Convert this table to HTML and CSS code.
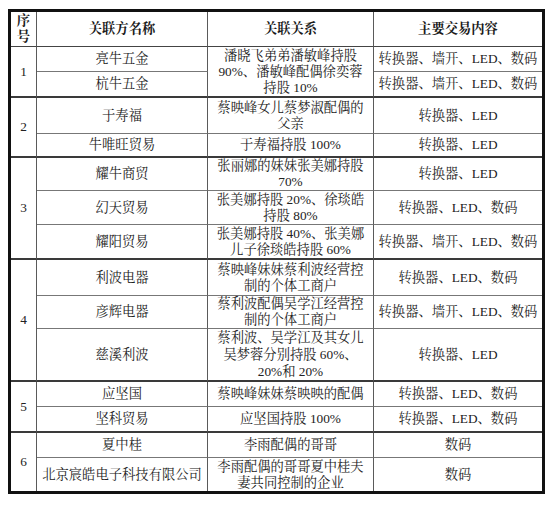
FILE: index.html
```html
<!DOCTYPE html>
<html lang="zh-CN">
<head>
<meta charset="utf-8">
<title>关联方交易</title>
<link rel="stylesheet" href="styles.css">
</head>
<body>
<table class="rel">
  <colgroup>
    <col class="c1"><col class="c2"><col class="c3"><col class="c4">
  </colgroup>
  <thead>
    <tr class="h">
      <th>序<br>号</th>
      <th>关联方名称</th>
      <th>关联关系</th>
      <th>主要交易内容</th>
    </tr>
  </thead>
  <tbody>
    <tr class="r25">
      <td rowspan="2" class="num ge">1</td>
      <td>亮牛五金</td>
      <td rowspan="2" class="ge">潘晓飞弟弟潘敏峰持股<br>90%、潘敏峰配偶徐奕蓉<br>持股 10%</td>
      <td>转换器、墙开、LED、数码</td>
    </tr>
    <tr class="r26 gend">
      <td>杭牛五金</td>
      <td>转换器、墙开、LED、数码</td>
    </tr>

    <tr class="r36">
      <td rowspan="2" class="num ge">2</td>
      <td>于寿福</td>
      <td>蔡映峰女儿蔡梦淑配偶的<br>父亲</td>
      <td>转换器、LED</td>
    </tr>
    <tr class="r24 gend">
      <td>牛唯旺贸易</td>
      <td>于寿福持股 100%</td>
      <td>转换器、LED</td>
    </tr>

    <tr class="r33">
      <td rowspan="3" class="num ge">3</td>
      <td>耀牛商贸</td>
      <td>张丽娜的妹妹张美娜持股<br>70%</td>
      <td>转换器、LED</td>
    </tr>
    <tr class="r34">
      <td>幻天贸易</td>
      <td>张美娜持股 20%、徐琰皓<br>持股 80%</td>
      <td>转换器、LED、数码</td>
    </tr>
    <tr class="r35 gend">
      <td>耀阳贸易</td>
      <td>张美娜持股 40%、张美娜<br>儿子徐琰皓持股 60%</td>
      <td>转换器、墙开、LED、数码</td>
    </tr>

    <tr class="r36">
      <td rowspan="3" class="num ge">4</td>
      <td>利波电器</td>
      <td>蔡映峰妹妹蔡利波经营控<br>制的个体工商户</td>
      <td>转换器、LED、数码</td>
    </tr>
    <tr class="r33">
      <td>彦辉电器</td>
      <td>蔡利波配偶吴学江经营控<br>制的个体工商户</td>
      <td>转换器、墙开、LED、数码</td>
    </tr>
    <tr class="r53 gend">
      <td>慈溪利波</td>
      <td class="l3">蔡利波、吴学江及其女儿<br>吴梦蓉分别持股 60%、<br>20%和 20%</td>
      <td>转换器、LED</td>
    </tr>

    <tr class="r25">
      <td rowspan="2" class="num ge">5</td>
      <td>应坚国</td>
      <td>蔡映峰妹妹蔡映映的配偶</td>
      <td>转换器、LED、数码</td>
    </tr>
    <tr class="r26 gend">
      <td>坚科贸易</td>
      <td>应坚国持股 100%</td>
      <td>转换器、LED、数码</td>
    </tr>

    <tr class="r25">
      <td rowspan="2" class="num last">6</td>
      <td>夏中桂</td>
      <td>李雨配偶的哥哥</td>
      <td>数码</td>
    </tr>
    <tr class="r33 lastrow">
      <td>北京宸皓电子科技有限公司</td>
      <td>李雨配偶的哥哥夏中桂夫<br>妻共同控制的企业</td>
      <td>数码</td>
    </tr>
  </tbody>
</table>
</body>
</html>
```

FILE: styles.css
```css
html, body {
  margin: 0;
  background: #ffffff;
}

body {
  padding: 9px 6px 0 8px;
  font-family: "Liberation Serif", "Noto Serif CJK SC", "Noto Sans CJK SC", serif;
  font-size: 13.3px;
  color: #222222;
}

.rel {
  border-collapse: separate;
  border-spacing: 0;
  border: 3px solid #111111;
  width: 537px;
  table-layout: fixed;
}

.c1 { width: 26px; }
.c2 { width: 171px; }
.c3 { width: 166px; }
.c4 { width: 168px; }

.rel th,
.rel td {
  padding: 0;
  text-align: center;
  vertical-align: middle;
  line-height: 16px;
  border-right: 1px solid #5a5a5a;
  border-bottom: 1px solid #777777;
  white-space: nowrap;
  overflow: visible;
}

.rel td.l3 {
  line-height: 17px;
}

.rel th {
  font-weight: bold;
  color: #1a1a1a;
  line-height: 16px;
  border-bottom: 1px solid #444444;
}

.rel th:last-child,
.rel td:last-child {
  border-right: none;
}

.rel tr.gend td,
.rel td.ge {
  border-bottom: 2px solid #3a3a3a;
}

.rel tr.lastrow td,
.rel td.last {
  border-bottom: none;
}

.h { height: 35px; }
.r24 { height: 24px; }
.r25 { height: 25px; }
.r26 { height: 26px; }
.r33 { height: 33px; }
.r34 { height: 34px; }
.r35 { height: 35px; }
.r36 { height: 36px; }
.r53 { height: 53px; }
```
